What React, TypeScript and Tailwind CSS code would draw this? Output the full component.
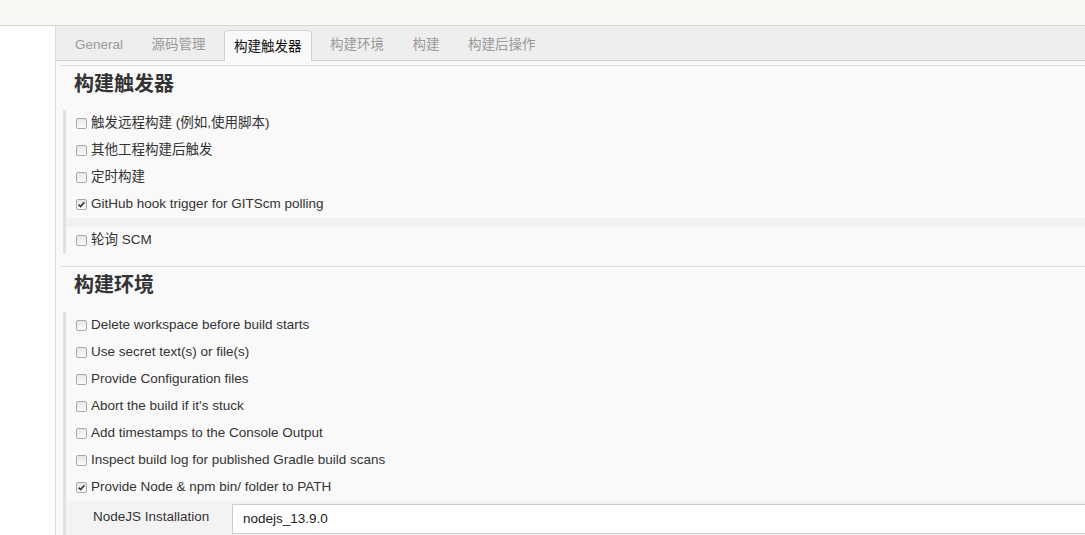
import React from 'react';

const tabs = ['General', '源码管理', '构建触发器', '构建环境', '构建', '构建后操作'];

const Check = ({ checked }: { checked?: boolean }) => (
  <span className="w-[11px] h-[11px] border border-[#a9a9a9] rounded-[2px] bg-gradient-to-b from-[#e6e6e6] to-[#fbfbfb] flex items-center justify-center shrink-0">
    {checked && (
      <svg width="9" height="9" viewBox="0 0 9 9">
        <path d="M1.6 4.6 L3.6 6.6 L7.4 2.2" fill="none" stroke="#3a3a3a" strokeWidth="1.7" />
      </svg>
    )}
  </span>
);

const Row = ({ label, checked }: { label: string; checked?: boolean }) => (
  <div className="h-[27px] flex items-center gap-[4px] pl-[10px]">
    <Check checked={checked} />
    <span className="text-[13.5px] text-[#333]">{label}</span>
  </div>
);

export default function App() {
  return (
    <div
      className="w-[1085px] h-[535px] overflow-hidden bg-white flex flex-col"
      style={{ fontFamily: '"Liberation Sans", "Noto Sans CJK SC", sans-serif' }}
    >
      <div className="h-[26px] shrink-0 bg-[#f7f9f2] border-b border-[#d3d3d3]" />
      <div className="flex flex-1 min-h-0">
        <div className="w-[56px] shrink-0 bg-white border-r border-[#dcdcdc]" />
        <div className="flex-1 min-w-0 bg-[#f9f9f9] flex flex-col">
          {/* tab bar */}
          <div className="h-[35px] shrink-0 bg-[#eeeeee] border-b border-[#d0d0d0] flex items-end pl-[9px] gap-[8.5px]">
            {tabs.map((t) =>
              t === '构建触发器' ? (
                <div
                  key={t}
                  className="h-[31px] -mb-px px-[9px] pt-[2px] flex items-center bg-[#f9f9f9] border border-b-0 border-[#d0d0d0] rounded-t-[4px] text-[13.5px] text-[#111]"
                >
                  {t}
                </div>
              ) : (
                <div key={t} className="h-[31px] px-[10px] pt-[2px] flex items-center text-[13.5px] text-[#9a9a9a]">
                  {t}
                </div>
              )
            )}
          </div>

          <div className="ml-[4px] mt-[4px] flex flex-col">
            {/* 构建触发器 */}
            <section className="border-t border-[#dddddd] pb-[12px]">
              <h2 className="pl-[14px] pt-[5px] h-[44px] leading-[26px] text-[20px] font-bold text-[#333]">构建触发器</h2>
              <div className="ml-[3px] border-l-[3px] border-[#e0e0e0]">
                <Row label="触发远程构建 (例如,使用脚本)" />
                <Row label="其他工程构建后触发" />
                <Row label="定时构建" />
                <Row label="GitHub hook trigger for GITScm polling" checked />
                <div className="h-[9px] bg-[#f1f1f1]" />
                <Row label="轮询 SCM" />
              </div>
            </section>

            {/* 构建环境 */}
            <section className="border-t border-[#dddddd]">
              <h2 className="pl-[14px] pt-[5px] h-[45px] leading-[26px] text-[20px] font-bold text-[#333]">构建环境</h2>
              <div className="ml-[3px] border-l-[3px] border-[#e0e0e0]">
                <Row label="Delete workspace before build starts" />
                <Row label="Use secret text(s) or file(s)" />
                <Row label="Provide Configuration files" />
                <Row label="Abort the build if it's stuck" />
                <Row label="Add timestamps to the Console Output" />
                <Row label="Inspect build log for published Gradle build scans" />
                <Row label="Provide Node & npm bin/ folder to PATH" checked />
                <div className="bg-[#f3f3f3] pt-[3px] pb-[6px] pl-[27px] flex items-center">
                  <span className="w-[139px] shrink-0 text-[13.5px] text-[#333] -mt-[4px]">NodeJS Installation</span>
                  <div className="flex-1 h-[30px] bg-white border border-r-0 border-[#cccccc] flex items-center pl-[10px] text-[13.5px] text-[#222]">
                    nodejs_13.9.0
                  </div>
                </div>
              </div>
            </section>
          </div>
        </div>
      </div>
    </div>
  );
}
